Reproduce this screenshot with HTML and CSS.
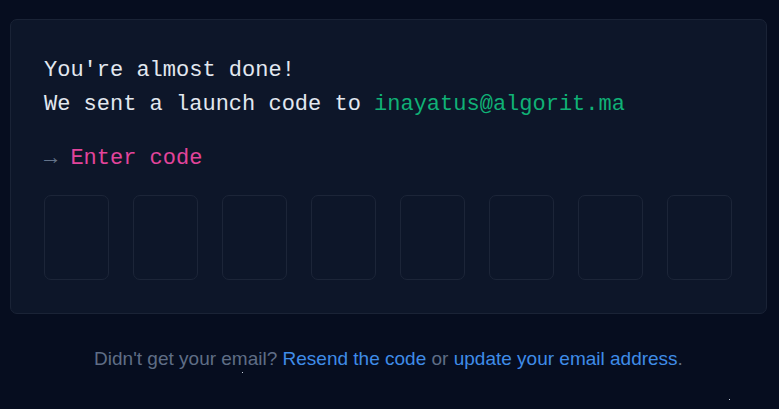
FILE: index.html
```html
<!DOCTYPE html>
<html lang="en">
<head>
<meta charset="utf-8">
<title>Enter launch code</title>
<link rel="stylesheet" href="styles.css">
</head>
<body>
<main class="page">
  <section class="card">
    <p class="line">You're almost done!</p>
    <p class="line">We sent a launch code to <span class="email">inayatus@algorit.ma</span></p>
    <p class="prompt"><span class="arrow">→</span> Enter code</p>
    <div class="codes">
      <input class="digit" maxlength="1" aria-label="Digit 1">
      <input class="digit" maxlength="1" aria-label="Digit 2">
      <input class="digit" maxlength="1" aria-label="Digit 3">
      <input class="digit" maxlength="1" aria-label="Digit 4">
      <input class="digit" maxlength="1" aria-label="Digit 5">
      <input class="digit" maxlength="1" aria-label="Digit 6">
      <input class="digit" maxlength="1" aria-label="Digit 7">
      <input class="digit" maxlength="1" aria-label="Digit 8">
    </div>
  </section>
  <p class="footer">Didn't get your email? <a href="#" class="link">Resend the code</a> or <a href="#" class="link">update your email address</a>.</p>
  <span class="star star-a"></span>
  <span class="star star-b"></span>
</main>
</body>
</html>
```

FILE: styles.css
```css
html, body {
  margin: 0;
  padding: 0;
  background: #060d1f;
  height: 100%;
}

.page {
  position: relative;
  box-sizing: border-box;
  height: 409px;
  padding: 19px 12px 0 10px;
  overflow: hidden;
}

.card {
  background: #0d1629;
  border: 1px solid #1a2336;
  border-radius: 7px;
  padding: 34px 33px 33px 33px;
  font-family: "Liberation Mono", "DejaVu Sans Mono", monospace;
  font-size: 22px;
  line-height: 34px;
  color: #e2e8f0;
}

.line {
  margin: 0;
}

.email {
  color: #10b176;
}

.prompt {
  margin: 20px 0 0 0;
  color: #e2449b;
}

.arrow {
  color: #64748b;
}

.codes {
  display: grid;
  grid-template-columns: repeat(8, 65px);
  gap: 24px;
  margin-top: 19px;
}

.digit {
  box-sizing: border-box;
  height: 85px;
  width: 65px;
  margin: 0;
  padding: 0;
  background: transparent;
  border: 1px solid #1c2538;
  border-radius: 7px;
  outline: none;
  color: #e2e8f0;
  font-family: inherit;
  font-size: 28px;
  text-align: center;
}

.footer {
  margin: 34px 0 0 0;
  text-align: center;
  font-family: "Liberation Sans", Arial, sans-serif;
  font-size: 19px;
  color: #5f6d86;
}

.link {
  color: #3f8ce8;
  text-decoration: none;
}

.star {
  position: absolute;
  width: 1px;
  height: 1px;
  background: #c8d0dc;
}

.star-a {
  left: 242px;
  top: 372px;
}

.star-b {
  left: 729px;
  top: 399px;
}
```
